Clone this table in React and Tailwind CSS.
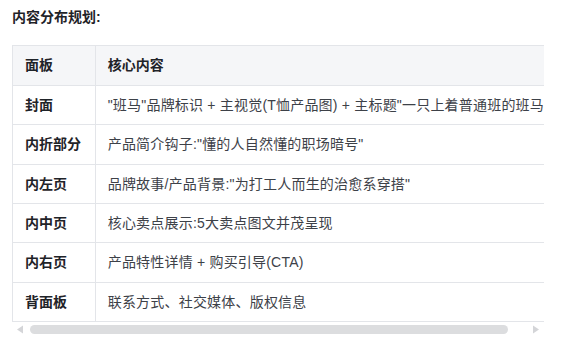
import React from 'react';

const rows = [
  ['封面', '"班马"品牌标识 + 主视觉(T恤产品图) + 主标题"一只上着普通班的班马"'],
  ['内折部分', '产品简介钩子:"懂的人自然懂的职场暗号"'],
  ['内左页', '品牌故事/产品背景:"为打工人而生的治愈系穿搭"'],
  ['内中页', '核心卖点展示:5大卖点图文并茂呈现'],
  ['内右页', '产品特性详情 + 购买引导(CTA)'],
  ['背面板', '联系方式、社交媒体、版权信息'],
];

const Arrow = ({ dir }) => (
  <svg width="15" height="15" viewBox="0 0 15 15" className="shrink-0">
    {dir === 'left' ? (
      <path d="M5 7.5 L11 3.5 L11 11.5 Z" fill="#d4d5d8" />
    ) : (
      <path d="M10 7.5 L4 3.5 L4 11.5 Z" fill="#d4d5d8" />
    )}
  </svg>
);

const App = () => {
  return (
    <div
      className="min-h-screen bg-white px-3 pt-[6px] text-[14px] leading-[1.6]"
      style={{ fontFamily: '"Liberation Sans", "Noto Sans CJK SC", sans-serif' }}
    >
      <div className="font-bold text-[#1f2328] mb-[17px]">内容分布规划:</div>

      <div className="w-[532px]">
        <div className="overflow-x-hidden">
          <table className="min-w-[560px] border-collapse whitespace-nowrap">
            <thead>
              <tr className="bg-[#f5f6f8]">
                <th className="border border-[#e3e5e9] px-3 py-2 text-left font-bold text-[#1f2328]">面板</th>
                <th className="border border-[#e3e5e9] px-3 py-2 text-left font-bold text-[#1f2328]">核心内容</th>
              </tr>
            </thead>
            <tbody>
              {rows.map(([panel, content]) => (
                <tr key={panel}>
                  <td className="border border-[#e3e5e9] px-3 py-2 font-bold text-[#1f2328]">{panel}</td>
                  <td className="border border-[#e3e5e9] px-3 py-2 text-[#3d4148] tracking-[0.2px]">{content}</td>
                </tr>
              ))}
            </tbody>
          </table>
        </div>

        {/* horizontal scrollbar */}
        <div className="flex items-center h-[15px]">
          <Arrow dir="left" />
          <div className="flex-1 flex items-center px-[3px]">
            <div className="h-[9px] w-[478px] rounded-full bg-[#dcdddf]" />
          </div>
          <Arrow dir="right" />
        </div>
      </div>
    </div>
  );
};

export default App;
